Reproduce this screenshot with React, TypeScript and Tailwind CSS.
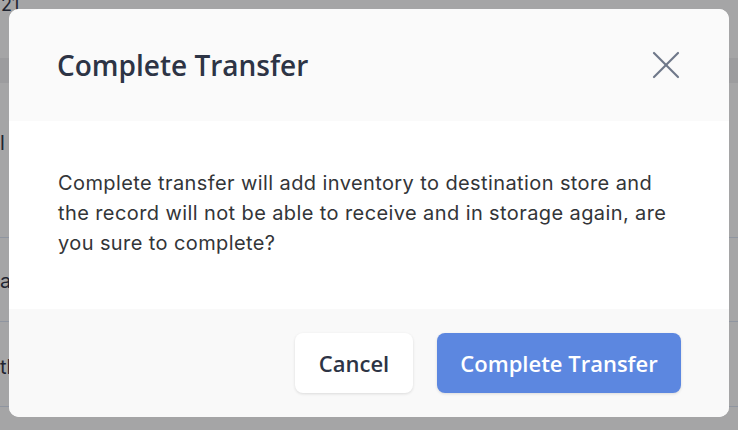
import { X } from "lucide-react";

export default function App() {
  return (
    <div className="relative h-[430px] w-[738px] overflow-hidden bg-[#a5a5a6] font-['Inter',sans-serif]">
      {/* page behind the overlay */}
      <div className="flex flex-col text-[#1f2430]">
        <div className="h-[60px] text-[18px] leading-[14px] -mt-[2px] pl-[1px]">21</div>
        <div className="h-[25px] bg-[#9c9c9e]" />
        <div className="h-[155px] border-b border-[#8f95a0] pt-[45px] text-[20px]">l</div>
        <div className="h-[84px] border-b border-[#8f95a0] pt-[28px] text-[20px]">a</div>
        <div className="h-[85px] border-b border-[#8f95a0] pt-[30px] text-[20px]">th</div>
      </div>

      {/* modal */}
      <div className="absolute left-[9px] top-[9px] flex h-[408px] w-[720px] flex-col overflow-hidden rounded-[10px] bg-white">
        <div className="flex h-[112px] items-center justify-between bg-[#fafafa] pl-[48px] pr-[39px]">
          <h2 className="font-['Open_Sans',sans-serif] text-[28px] font-semibold text-[#2d3445]">
            Complete Transfer
          </h2>
          <X className="h-[48px] w-[48px] text-[#6e7789]" strokeWidth={1.1} />
        </div>
        <div className="flex h-[188px] items-center px-[49px] pb-[4px]">
          <p className="text-[20px] leading-[30px] tracking-[0.4px] text-[#333538]">
            Complete transfer will add inventory to destination store and
            <br />
            the record will not be able to receive and in storage again, are
            <br />
            you sure to complete?
          </p>
        </div>
        <div className="flex flex-1 items-center justify-end gap-[24px] bg-[#f9f9f9] pr-[48px]">
          <button className="h-[60px] w-[118px] rounded-[8px] bg-white font-['Open_Sans',sans-serif] text-[22px] font-semibold text-[#2d3445] shadow-[0_1px_3px_rgba(0,0,0,0.12)]">
            Cancel
          </button>
          <button className="h-[60px] w-[244px] rounded-[8px] bg-[#5c87e0] font-['Open_Sans',sans-serif] text-[22px] font-semibold text-white shadow-[0_1px_3px_rgba(0,0,0,0.12)]">
            Complete Transfer
          </button>
        </div>
      </div>
    </div>
  );
}
